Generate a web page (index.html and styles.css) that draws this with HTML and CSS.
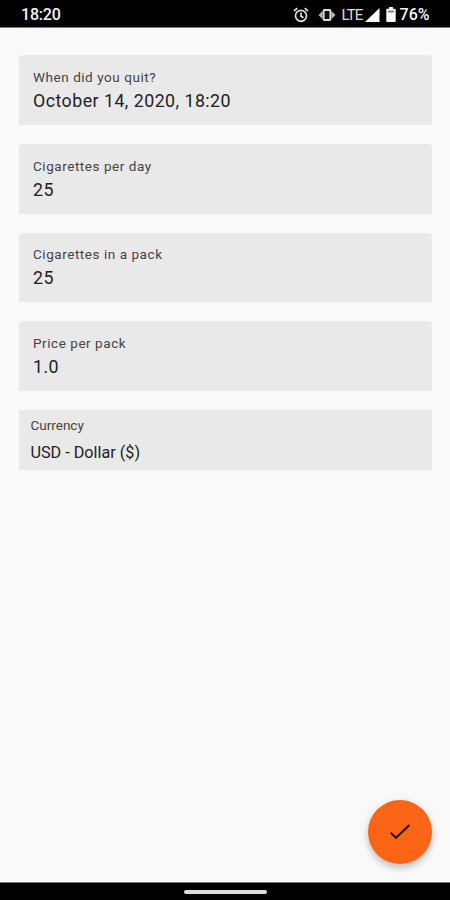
FILE: index.html
```html
<!DOCTYPE html>
<html lang="en">
<head>
<meta charset="utf-8">
<title>Quit details</title>
<link rel="stylesheet" href="styles.css">
</head>
<body>
<header class="status">
  <span class="clock">18:20</span>
  <div class="indicators">
    <svg class="alarm" width="16" height="16" viewBox="0 0 16 16" fill="none" stroke="#ddd" stroke-width="1.7"><circle cx="8" cy="8.8" r="5.5"/><path d="M1 4 4.3 1.2M15 4l-3.3-2.8M8 5.4v3.8l2.5 1.6"/></svg>
    <svg class="vibrate" width="18" height="14" viewBox="0 0 18 14"><path d="M4.500 3v8L.5 7zM13.500 3v8l4-4z" fill="#bbb"/><rect x="5.6" y="2" width="6.8" height="10" rx=".8" fill="#111" stroke="#ddd" stroke-width="1.9"/></svg>
    <span class="network">LTE</span>
    <svg class="signal" width="15" height="14" viewBox="0 0 15 14"><path d="M0 14 14.5 0v14z" fill="#fff"/></svg>
    <svg class="battery" width="10" height="15" viewBox="0 0 10 16"><path d="M3 0h4v1.8h2q1 0 1 1V15q0 1-1 1H1q-1 0-1-1V2.800q0-1 1-1h2z" fill="#fff"/><path d="M2 3.800h6v2H2z" fill="#777"/></svg>
    <span class="percent">76%</span>
  </div>
</header>
<main class="form">
  <div class="field"><span class="label">When did you quit?</span><span class="value">October 14, 2020, 18:20</span></div>
  <div class="field"><span class="label">Cigarettes per day</span><span class="value">25</span></div>
  <div class="field"><span class="label">Cigarettes in a pack</span><span class="value">25</span></div>
  <div class="field"><span class="label">Price per pack</span><span class="value">1.0</span></div>
  <div class="field currency"><span class="label">Currency</span><span class="value">USD - Dollar ($)</span></div>
</main>
<button class="fab" aria-label="Save"><svg width="26" height="26" viewBox="0 0 26 26" fill="none" stroke="#25140c" stroke-width="2"><path d="m3.700 13.600 5.300 5.200L22.500 6"/></svg></button>
<footer class="nav"><div class="handle"></div></footer>
</body>
</html>
```
FILE: styles.css
```css
* { box-sizing: border-box; }
body {
  margin: 0;
  height: 900px;
  display: flex;
  flex-direction: column;
  overflow: hidden;
  background: #f9f9f9;
  color: #222;
  font-family: Roboto, sans-serif;
}
.status {
  height: 28px;
  flex: none;
  display: flex;
  justify-content: space-between;
  padding: 2px 20.500px 0 21px;
  background: #000;
  border-bottom: 1px solid #777;
  color: #f4f4f4;
}
.clock, .percent { font: 500 16px/26px Roboto, sans-serif; }
.clock { letter-spacing: -.2px; }
.indicators { display: flex; align-items: center; }
.vibrate { margin-left: 9px; }
.network { margin-left: 5px; font-size: 15px; line-height: 26px; letter-spacing: -.8px; color: #ddd; }
.signal { margin-left: 2px; }
.battery { margin-left: 6px; }
.percent { margin-left: 4px; letter-spacing: 0; }
.form {
  flex: 1;
  display: flex;
  flex-direction: column;
  gap: 19.2px;
  padding: 27.4px 17.6px 0 19px;
}
.field {
  height: 69.5px;
  display: flex;
  flex-direction: column;
  padding: 13.700px 14px 0;
  border-radius: 4px 4px 1px 1px;
  background: #e9e9e9;
}
.label { font-size: 13.5px; line-height: 17px; letter-spacing: .55px; color: #444; }
.value { margin-top: 3px; font-size: 17.8px; line-height: 24px; letter-spacing: .47px; }
.currency { height: 60px; padding: 7px 11.500px 0; border-radius: 1px; }
.currency .label { letter-spacing: 0; }
.currency .value { margin-top: 7px; font-size: 16.2px; letter-spacing: 0; }
.fab {
  position: absolute;
  left: 368px;
  top: 799.500px;
  width: 64px;
  height: 64px;
  display: grid;
  place-items: center;
  padding: 0;
  border: 0;
  border-radius: 50%;
  background: #fd6516;
  box-shadow: 0 4px 7px rgba(0, 0, 0, .2), 0 1px 12px rgba(0, 0, 0, .06);
}
.nav {
  height: 18px;
  flex: none;
  display: flex;
  justify-content: center;
  padding-top: 7px;
  background: #000;
  border-top: 1px solid #777;
}
.handle { width: 83px; height: 4px; border-radius: 2px; background: #ddd; }
```
